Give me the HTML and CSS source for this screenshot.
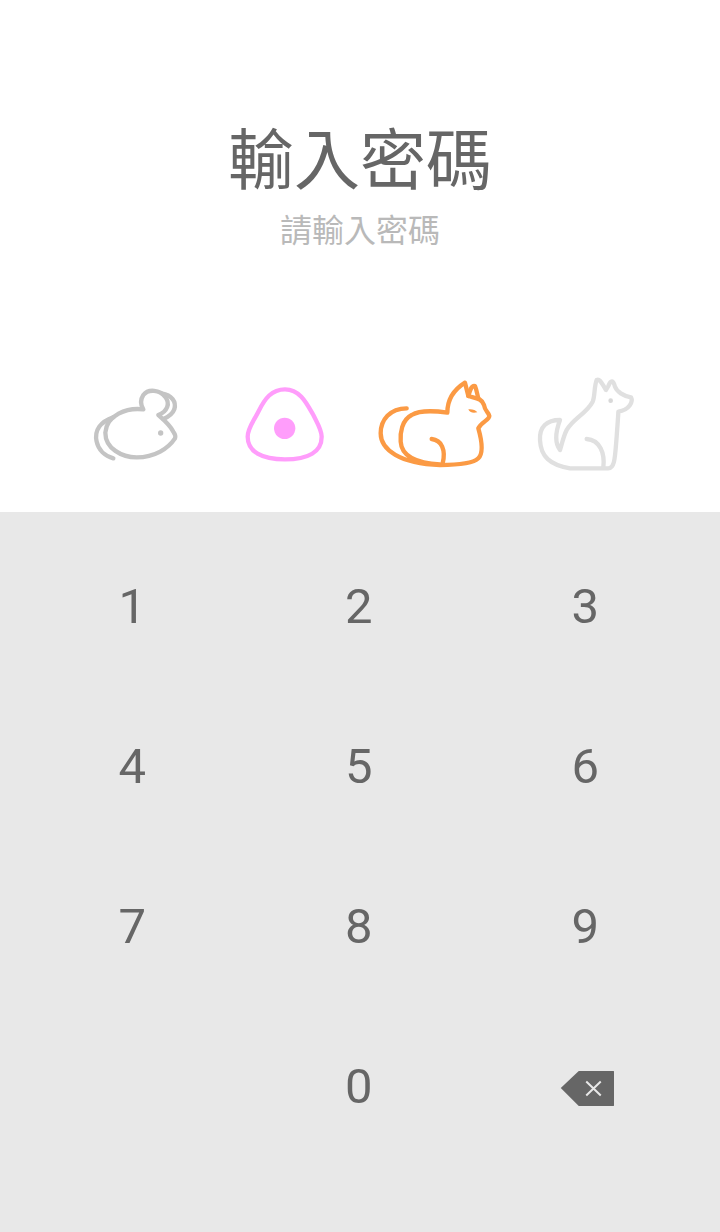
FILE: index.html
```html
<!DOCTYPE html>
<html lang="zh-Hant">
<head>
<meta charset="utf-8">
<title>輸入密碼</title>
<link rel="stylesheet" href="styles.css">
</head>
<body>
<main class="screen">
  <header class="header">
    <h1 class="title">輸入密碼</h1>
    <p class="subtitle">請輸入密碼</p>
  </header>
  <div class="slots">
    <svg class="slot mouse" viewBox="-57 0 450 330">
      <path d="M190 118C140 112 80 135 76 188C76 235 125 262 170 262C225 262 265 235 285 205C288 198 285 192 280 185C270 165 250 148 235 135C262 125 272 100 255 80C240 60 205 55 190 75C180 90 182 105 190 118Z"/>
      <path d="M245 70C275 75 290 95 283 118C278 132 262 142 250 147"/>
      <path d="M100 142C62 155 42 180 50 215C55 240 75 258 100 265"/>
      <circle class="fill" cx="242" cy="189" r="8"/>
    </svg>
    <svg class="slot rice" viewBox="393 0 450 330">
      <path d="M615 58C660 58 680 100 700 135C715 165 725 180 725 200C725 245 685 268 615 268C545 268 503 245 503 200C503 175 520 155 535 125C555 85 575 58 615 58Z"/>
      <circle class="fill" cx="614" cy="175" r="32"/>
    </svg>
    <svg class="slot cat" viewBox="-27 0 450 330">
      <path d="M110 115C60 115 32 150 32 190C32 240 90 280 210 285C270 285 310 280 325 265C340 250 335 210 325 175C335 155 358 150 358 138C355 125 345 125 342 105C335 85 320 85 295 78L285 38C250 60 232 90 232 128C190 122 150 120 125 135C95 150 90 190 92 215C95 265 150 280 210 283"/>
      <path d="M185 207C215 210 228 240 218 280"/>
      <path d="M295 78C300 60 305 45 315 48C320 60 322 75 325 85"/>
      <path class="fill" d="M295 118C305 116 317 120 322 127C308 130 298 127 295 118Z"/>
    </svg>
    <svg class="slot dog" viewBox="423 0 450 330">
      <path d="M570 150C530 150 508 170 510 210C512 260 540 285 600 295L715 295C735 295 735 260 740 200C742 170 745 135 745 125C778 120 790 95 783 82C760 78 740 65 735 50C730 30 722 28 715 48L708 60C695 40 690 25 680 30C672 50 675 80 668 95C650 130 610 145 590 180C580 200 575 225 570 240C555 220 555 190 570 150Z"/>
      <path d="M650 207C690 210 705 250 700 292"/>
      <circle class="fill" cx="722" cy="92" r="7"/>
    </svg>
  </div>
  <section class="keypad">
    <button class="key">1</button>
    <button class="key">2</button>
    <button class="key">3</button>
    <button class="key">4</button>
    <button class="key">5</button>
    <button class="key">6</button>
    <button class="key">7</button>
    <button class="key">8</button>
    <button class="key">9</button>
    <span class="key"></span>
    <button class="key">0</button>
    <button class="key" aria-label="刪除">
      <svg class="backspace" viewBox="556.250 1066 58 40">
        <path class="backspace-body" d="M561 1088L579 1071H613.500Q615 1071 615 1072.500V1104.500Q615 1106 613.500 1106H579Z"/>
        <path class="backspace-x" d="M586.500 1081.500L601 1095.500M601 1081.500L586.500 1095.500"/>
      </svg>
    </button>
  </section>
</main>
</body>
</html>
```
FILE: styles.css
```css
* { box-sizing: border-box; }
html, body { margin: 0; padding: 0; background: #fff; }
.screen {
  width: 720px;
  height: 1232px;
  display: flex;
  flex-direction: column;
  font-family: "Noto Sans CJK TC", "Noto Sans CJK SC", Roboto, sans-serif;
}
.header {
  height: 370px;
  padding-top: 107px;
  text-align: center;
}
.title {
  margin: 0 0 2px;
  font-size: 66px;
  line-height: 96px;
  font-weight: 400;
  color: #666;
}
.subtitle {
  margin: 0;
  font-size: 32px;
  line-height: 46px;
  color: #b9b9b9;
}
.slots {
  height: 142px;
  padding: 0 59px 0 61px;
  display: flex;
  align-items: flex-start;
}
.slot {
  width: 150px;
  height: 110px;
  fill: none;
  stroke-width: 13;
  stroke-linecap: round;
  stroke-linejoin: round;
}
.slot .fill { stroke: none; }
.mouse { stroke: #c4c4c4; }
.mouse .fill { fill: #c4c4c4; }
.rice { stroke: #ff9dfb; }
.rice .fill { fill: #ff9dfb; }
.cat { stroke: #fb9a44; }
.cat .fill { fill: #fb9a44; }
.dog { stroke: #e0e0e0; }
.dog .fill { fill: #d8d8d8; }
.keypad {
  flex: 1;
  background: #e8e8e8;
  padding: 14px 20.500px 65px 19px;
  display: grid;
  grid-template-columns: repeat(3, 226.500px);
  grid-auto-rows: 160px;
}
.key {
  border: 0;
  background: none;
  padding: 0;
  display: flex;
  align-items: center;
  justify-content: center;
  font-family: Roboto, sans-serif;
  font-size: 49px;
  color: #666;
}
.backspace {
  width: 58px;
  height: 40px;
  display: block;
}
.backspace-body { fill: #666; }
.backspace-x { fill: none; stroke: #e8e8e8; stroke-width: 2; }
```
